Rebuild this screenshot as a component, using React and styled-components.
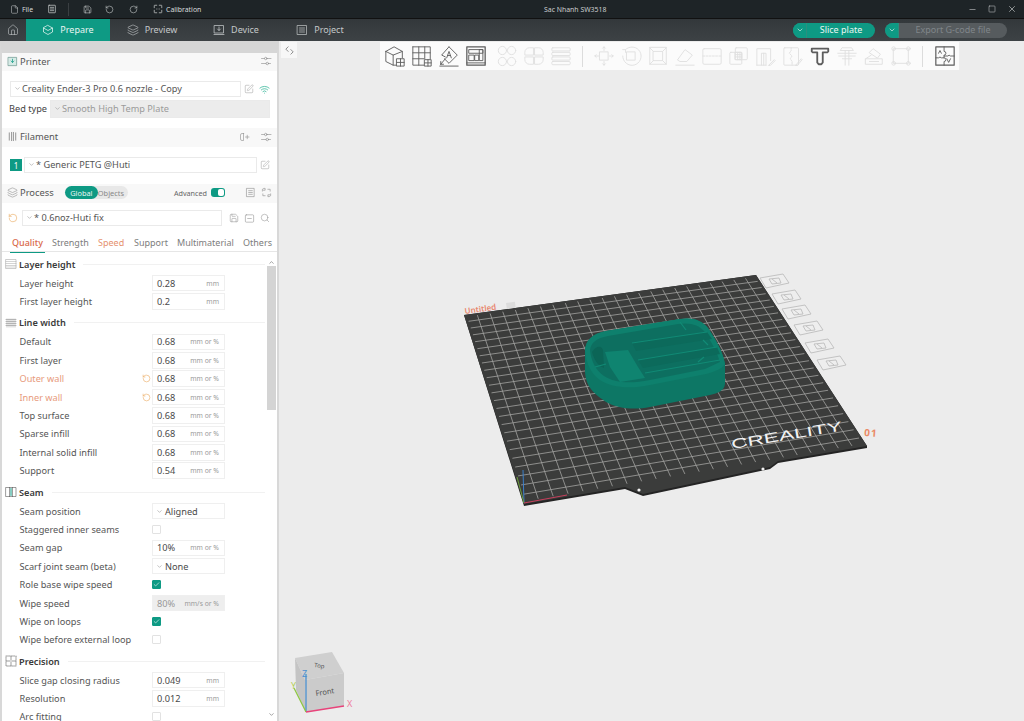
import React from "react";
import styled, { createGlobalStyle } from "styled-components";
import {
  File,
  House,
  Layers,
  Minus,
  RotateCcw,
  RotateCw,
  Save,
  Search,
  Square,
  SquarePen,
  Wifi,
  X,
  ChevronDown,
  ChevronUp,
  Check,
} from "lucide-react";

const GlobalStyle = createGlobalStyle`
  html, body {
    margin: 0;
    padding: 0;
    overflow: hidden;
    background: #ececec;
  }
  * {
    box-sizing: border-box;
  }
  body {
    font-family: "Noto Sans", "Open Sans", sans-serif;
    color: #444;
  }
`;

const TEAL = "#0e9a84";

const sections = [
  {
    title: "Layer height",
    icon: "layer",
    rows: [
      { label: "Layer height", value: "0.28", unit: "mm" },
      { label: "First layer height", value: "0.2", unit: "mm" },
    ],
  },
  {
    title: "Line width",
    icon: "line",
    rows: [
      { label: "Default", value: "0.68", unit: "mm or %" },
      { label: "First layer", value: "0.68", unit: "mm or %" },
      { label: "Outer wall", value: "0.68", unit: "mm or %", changed: true },
      { label: "Inner wall", value: "0.68", unit: "mm or %", changed: true },
      { label: "Top surface", value: "0.68", unit: "mm or %" },
      { label: "Sparse infill", value: "0.68", unit: "mm or %" },
      { label: "Internal solid infill", value: "0.68", unit: "mm or %" },
      { label: "Support", value: "0.54", unit: "mm or %" },
    ],
  },
  {
    title: "Seam",
    icon: "seam",
    rows: [
      { label: "Seam position", select: "Aligned" },
      { label: "Staggered inner seams", check: false },
      { label: "Seam gap", value: "10%", unit: "mm or %" },
      { label: "Scarf joint seam (beta)", select: "None" },
      { label: "Role base wipe speed", check: true },
      { label: "Wipe speed", value: "80%", unit: "mm/s or %", disabled: true },
      { label: "Wipe on loops", check: true },
      { label: "Wipe before external loop", check: false },
    ],
  },
  {
    title: "Precision",
    icon: "precision",
    rows: [
      { label: "Slice gap closing radius", value: "0.049", unit: "mm" },
      { label: "Resolution", value: "0.012", unit: "mm" },
      { label: "Arc fitting", check: false },
    ],
  },
];

const tabs = [
  { name: "Quality", w: 40, active: true },
  { name: "Strength", w: 46 },
  { name: "Speed", w: 36, changed: true },
  { name: "Support", w: 43 },
  { name: "Multimaterial", w: 66 },
  { name: "Others", w: 32 },
];

const Page = styled.div`
  width: 1024px;
  height: 721px;
  display: flex;
  flex-direction: column;
  overflow: hidden;
`;

const TitleBar = styled.header`
  height: 19px;
  flex: none;
  display: flex;
  align-items: center;
  background: #1e2427;
  border-bottom: 1px solid #111;
  color: #d9dcdd;
  font-size: 6.9px;
`;

const TitleLeft = styled.div`
  flex: 0 0 544px;
  display: flex;
  align-items: center;
  padding-left: 10px;
`;

const TitleItem = styled.div`
  display: flex;
  align-items: center;
  gap: 3px;
  margin-right: ${(p) => p.$mr || 14}px;
`;

const TitleDivider = styled.div`
  width: 1px;
  height: 13px;
  background: #3a3f42;
  margin-right: 14px;
`;

const DocName = styled.div`
  flex: none;
  color: #c9cccd;
`;

const WindowControls = styled.div`
  margin-left: auto;
  display: flex;
  align-items: center;
  gap: 11px;
  padding-right: 7px;
  color: #d0d3d4;
`;

const NavBar = styled.nav`
  height: 22px;
  flex: none;
  display: flex;
  align-items: stretch;
  background: linear-gradient(#33383b, #3d4245);
  color: #c4c8c9;
  font-size: 9px;
`;

const HomeTab = styled.div`
  width: 26px;
  display: flex;
  align-items: center;
  justify-content: center;
`;

const NavTab = styled.div`
  width: 84px;
  padding-bottom: 1px;
  display: flex;
  align-items: center;
  justify-content: center;
  gap: 6px;
  background: ${(p) => (p.$active ? TEAL : "transparent")};
  color: ${(p) => (p.$active ? "#e8f5f2" : "inherit")};
`;

const NavRight = styled.div`
  margin-left: auto;
  display: flex;
  align-items: center;
  gap: 10px;
  padding-right: 17px;
`;

const SplitButton = styled.div`
  width: ${(p) => p.$w}px;
  height: 15px;
  display: flex;
  border-radius: 8px;
  overflow: hidden;
  font-size: 9px;
  background: ${(p) => (p.$off ? "#565b5e" : TEAL)};
  color: ${(p) => (p.$off ? "#80868a" : "#eaf6f3")};
`;

const SplitArrow = styled.div`
  width: 14px;
  display: flex;
  align-items: center;
  justify-content: center;
  background: ${TEAL};
  color: #dff2ee;
  border-right: 1px solid #2c8f7e;
`;

const SplitLabel = styled.div`
  flex: 1;
  padding-bottom: 1px;
  display: flex;
  align-items: center;
  justify-content: center;
`;

const Main = styled.main`
  flex: 1;
  min-height: 0;
  display: flex;
`;

const Sidebar = styled.aside`
  width: 279px;
  flex: none;
  display: flex;
  flex-direction: column;
  background: #fff;
  border-left: 2px solid #d8d8d8;
  border-right: 2px solid #d8d8d8;
  border-top: 12px solid #d6d6d6;
  font-size: 9.2px;
`;

const PanelHead = styled.div`
  height: ${(p) => p.$h || 18}px;
  margin-top: ${(p) => p.$mt || 0}px;
  flex: none;
  display: flex;
  align-items: center;
  gap: 2px;
  padding: 0 5px 2px 5px;
  background: #f8f8f8;
  color: #555;
  font-size: 9.4px;
`;

const HeadRight = styled.div`
  margin-left: auto;
  display: flex;
  align-items: center;
  gap: ${(p) => p.$gap || 10}px;
  color: #8b8b8b;
`;

const PanelRow = styled.div`
  flex: none;
  height: ${(p) => p.$h}px;
  margin-top: ${(p) => p.$mt || 0}px;
  display: flex;
  align-items: center;
  padding: 0 7px 0 ${(p) => p.$pl || 8}px;
  gap: ${(p) => p.$gap || 3}px;
`;

const Select = styled.div`
  height: ${(p) => p.$h || 16}px;
  width: ${(p) => p.$w}px;
  flex: ${(p) => (p.$w ? "none" : 1)};
  display: flex;
  align-items: center;
  gap: 1px;
  padding: 0 0 1px 3px;
  border: 1px solid #eaeaea;
  background: ${(p) => (p.$off ? "#ececec" : "#fff")};
  color: ${(p) => (p.$off ? "#9b9b9b" : "#555")};
  font-size: 9.2px;
`;

const Caret = styled(ChevronDown)`
  color: #999;
  flex: none;
`;

const SideLabel = styled.span`
  color: #444;
  width: 38px;
  flex: none;
  padding-bottom: 1px;
  white-space: nowrap;
`;

const FilamentBadge = styled.div`
  width: 12px;
  height: 12px;
  flex: none;
  background: ${TEAL};
  color: #fff;
  font-size: 8px;
  display: flex;
  align-items: center;
  justify-content: center;
`;

const ToggleGroup = styled.div`
  width: 63px;
  height: 13px;
  margin-left: 9px;
  display: flex;
  align-items: center;
  border-radius: 7px;
  background: #e8e8e8;
  font-size: 7.4px;
  color: #888;
`;

const ToggleOn = styled.div`
  width: 33px;
  height: 13px;
  border-radius: 7px;
  display: flex;
  align-items: center;
  justify-content: center;
  background: ${TEAL};
  color: #e8f5f2;
`;

const ToggleOff = styled.div`
  padding-left: 0;
`;

const AdvancedLabel = styled.span`
  font-size: 7.2px;
  color: #666;
`;

const Switch = styled.div`
  width: 14px;
  height: 9px;
  border-radius: 3px;
  background: ${TEAL};
  display: flex;
  justify-content: flex-end;
  align-items: center;
  padding-right: 1px;
  margin-left: -1px;
  margin-right: 15px;

  &::after {
    content: "";
    width: 6px;
    height: 7px;
    border-radius: 2px;
    background: #fff;
  }
`;

const Tabs = styled.div`
  flex: none;
  height: 16px;
  margin-top: 10px;
  display: flex;
  padding-left: 8px;
  border-bottom: 1px solid #e6e6e6;
  font-size: 9px;
`;

const Tab = styled.div`
  width: ${(p) => p.$w}px;
  flex: none;
  white-space: nowrap;
`;

const TabLabel = styled.span`
  display: inline-block;
  height: 16px;
  line-height: 12px;
  padding: 0 2px;
  color: ${(p) => (p.$active ? "#d9694a" : p.$changed ? "#e5916f" : "#7d7d7d")};
  font-weight: ${(p) => (p.$active ? 500 : 400)};
  border-bottom: ${(p) => (p.$active ? `1.5px solid ${TEAL}` : "none")};
`;

const ScrollArea = styled.div`
  flex: 1;
  min-height: 0;
  display: flex;
  overflow: hidden;
`;

const Settings = styled.div`
  flex: 1;
  min-width: 0;
  overflow: hidden;
`;

const SectionHead = styled.div`
  height: 19.6px;
  margin-top: 2.4px;
  display: flex;
  align-items: center;
  gap: 2px;
  padding: 0 2px 0 3px;
  color: #3b3b3b;
  font-size: 9.2px;
  font-weight: 600;

  &::after {
    content: "";
    flex: 1;
    height: 1px;
    margin-left: 6px;
    background: #f1f1f1;
  }
`;

const Row = styled.div`
  height: 18.4px;
  display: grid;
  grid-template-columns: 150px 73px;
  align-items: center;
`;

const RowLabel = styled.div`
  display: flex;
  align-items: center;
  padding-left: 17.5px;
  padding-right: 1px;
  color: ${(p) => (p.$changed ? "#e79a7c" : "#555")};
  white-space: nowrap;
`;

const ResetSlot = styled.div`
  margin-left: auto;
  display: flex;
  color: #e9a657;
`;

const Field = styled.div`
  height: 16.5px;
  display: flex;
  align-items: center;
  justify-content: space-between;
  padding: 0 5px 0 4px;
  border: 1px solid #efefef;
  background: ${(p) => (p.$off ? "#eeeeee" : "#fff")};
  color: ${(p) => (p.$off ? "#999" : "#4a4a4a")};
  font-size: 9.2px;
`;

const Unit = styled.span`
  font-size: 6.8px;
  color: #9a9a9a;
`;

const FieldSelect = styled(Field)`
  justify-content: flex-start;
  gap: 2px;
  padding-left: 3px;
`;

const CheckBox = styled.div`
  width: 9px;
  height: 9px;
  border-radius: 1px;
  display: flex;
  align-items: center;
  justify-content: center;
  border: 1px solid ${(p) => (p.$on ? TEAL : "#e2e2e2")};
  background: ${(p) => (p.$on ? TEAL : "#fff")};
  color: #fff;
`;

const ScrollTrack = styled.div`
  width: 9px;
  flex: none;
  display: flex;
  flex-direction: column;
  align-items: center;
  background: #fff;
  margin-right: 1px;
  color: #666;
`;

const ScrollCap = styled.div`
  height: 14px;
  flex: none;
  display: flex;
  align-items: ${(p) => (p.$top ? "flex-end" : "center")};
  justify-content: center;
`;

const ScrollThumb = styled.div`
  width: 9px;
  height: 144px;
  flex: none;
  background: #d4d4d4;
`;

const ScrollRest = styled.div`
  flex: 1;
`;

const Viewport = styled.section`
  position: relative;
  flex: 1;
  min-width: 0;
  background: #ececec;
  overflow: hidden;
`;

const SceneSvg = styled.svg`
  display: block;
  width: 745px;
  height: 680px;
`;

const CollapseBtn = styled.div`
  position: absolute;
  left: 2px;
  top: 1px;
  width: 16px;
  height: 16px;
  background: #f7f7f7;
  display: flex;
  align-items: center;
  justify-content: center;
`;

const Toolbar = styled.div`
  position: absolute;
  left: 101px;
  top: 1px;
  height: 28px;
  display: flex;
  align-items: center;
  padding: 0 1px 0 1px;
  background: #fbfbfb;
`;

const ToolSlot = styled.div`
  width: 27px;
  height: 28px;
  display: flex;
  align-items: center;
  justify-content: center;
  margin-left: ${(p) => p.$ml || 0}px;
  color: ${(p) => (p.$off ? "#dfdfdf" : "#5d5d5d")};
`;

const ToolSep = styled.div`
  width: ${(p) => p.$w}px;
  display: flex;
  justify-content: center;

  &::after {
    content: "";
    width: 1px;
    height: 21px;
    background: #dcdcdc;
  }
`;

const Glyph = ({ size = 22, sw = 1, children }) => (
  <svg
    width={size}
    height={size}
    viewBox="0 0 24 24"
    fill="none"
    stroke="currentColor"
    strokeWidth={sw}
    strokeLinecap="round"
    strokeLinejoin="round"
  >
    {children}
  </svg>
);

const toolIcons = {
  cube: (
    <>
      <path d="M2 7l9-5 9 5v7M2 7v11l8 4h3M2 7l8 4 10-4M10 11v11" />
      <rect x="14" y="15" width="8" height="8" />
      <path d="M18 15v8M14 19h8" />
    </>
  ),
  grid: (
    <>
      <path d="M2 2h19v13M2 2v20h12M2 8.5h19M2 15h12M8.5 2v20M15 2v13" />
      <rect x="15" y="16" width="7" height="7" />
      <path d="M18.5 16v7M15 19.5h7" />
    </>
  ),
  orient: (
    <>
      <path d="M12 2l9 9-9 9-5-5M8 13l-4-2 8-9" />
      <path d="M3 21l5-6M3 21h3M3 21v-3M2 23h20" />
      <path d="M9.5 14l2.5-7 2.5 7M10.4 11.5h3.2" />
    </>
  ),
  arrange: (
    <>
      <rect x="2" y="2" width="20" height="20" strokeWidth="1.4" />
      <rect x="4.5" y="5" width="15" height="4" />
      <rect x="4.5" y="11" width="5.5" height="6" />
      <rect x="11" y="11" width="4" height="6" />
      <rect x="16" y="5" width="3.5" height="12" />
      <path d="M2 19.5h20" />
    </>
  ),
  splitA: (
    <>
      <circle cx="7" cy="6" r="4.5" />
      <circle cx="17" cy="6" r="4.5" />
      <circle cx="7" cy="18" r="4.5" />
      <circle cx="17" cy="18" r="4.5" />
    </>
  ),
  splitB: (
    <>
      <path d="M11 3H7a5 5 0 0 0-5 5v3h9zM13 3h4a5 5 0 0 1 5 5v3h-9zM11 21H7a5 5 0 0 1-5-5v-3h9zM13 21h4a5 5 0 0 0 5-5v-3h-9z" />
    </>
  ),
  stack: (
    <>
      <rect x="2" y="3" width="20" height="3.5" rx="1" />
      <rect x="2" y="8" width="20" height="3.5" rx="1" />
      <rect x="2" y="13" width="20" height="3.5" rx="1" />
      <rect x="2" y="18" width="20" height="3.5" rx="1" />
    </>
  ),
  move: (
    <>
      <rect x="7.5" y="7.5" width="9" height="9" />
      <path d="M12 2v4M12 18v4M2 12h4M18 12h4M10.5 3.5L12 2l1.5 1.5M10.5 20.5L12 22l1.5-1.5M3.5 10.5L2 12l1.5 1.5M20.5 10.5L22 12l-1.5 1.5" />
    </>
  ),
  rotate: (
    <>
      <path d="M6 5a10 10 0 1 1-3 7" />
      <rect x="7.5" y="7.5" width="9" height="9" />
      <path d="M3 5h3v3" />
    </>
  ),
  scale: (
    <>
      <rect x="7" y="7" width="10" height="10" />
      <path d="M3 3v18h18V3zM3 3l4 4M21 3l-4 4M3 21l4-4M21 21l-4-4" />
    </>
  ),
  flatten: (
    <>
      <path d="M4 16l8-11 8 6-6 7H7z" />
      <path d="M2 22h20" />
    </>
  ),
  cut: (
    <>
      <rect x="2" y="4" width="20" height="17" rx="1.5" />
      <path d="M2 12h20" strokeDasharray="2 1.5" />
    </>
  ),
  boolean: (
    <>
      <rect x="2" y="8" width="13" height="13" rx="1" />
      <rect x="8" y="3" width="13" height="13" rx="1" />
      <path d="M8 8h7v8H8zM8 10.5h7M8 13h7M10.5 8v8M13 8v8" />
    </>
  ),
  seamPaint: (
    <>
      <path d="M2 22V4h15v13M7 22V9h5v13M2 22h10M9.5 9v13" />
      <path d="M15 22l6-6 1 1-5 5z" />
    </>
  ),
  seamBrush: (
    <>
      <rect x="2" y="3" width="16" height="19" rx="1" />
      <path d="M10 3v3l-2 3 3 3-2 3 2 3v4" strokeDasharray="1.5 1.2" />
      <path d="M15 22l6-7 1 1-5 6z" />
    </>
  ),
  emboss: (
    <>
      <path d="M3 4h18v3l-1 1h-5v11l-1.5 2h-3L9 19V8H4L3 7z" strokeWidth="2" />
    </>
  ),
  stamp: (
    <>
      <path d="M7 3h10l2 3H5zM2 9h20M3 12h18M10 6v16M14 6v16M7 15h10" />
    </>
  ),
  measure: (
    <>
      <path d="M3 15h18v6H3zM3 15l6-4M7 8l4-4 8 6-3 4zM7 18h10" />
    </>
  ),
  assemble: (
    <>
      <rect x="4" y="4" width="16" height="16" />
      <circle cx="4" cy="4" r="2" />
      <circle cx="20" cy="4" r="2" />
      <circle cx="4" cy="20" r="2" />
      <circle cx="20" cy="20" r="2" />
    </>
  ),
  puzzle: (
    <>
      <rect x="2" y="2" width="20" height="20" strokeWidth="1.3" />
      <path d="M11 2v5a2 2 0 0 1 0 4v3h-3a2 2 0 0 0-3 0H2M11 14a2 2 0 0 1 0 4v4M11 12h4a2 2 0 0 1 3 0h4" />
      <path d="M5 9l1.5-3L8 9M14 15l2 4 2-4" />
    </>
  ),
};

const toolbar = [
  { i: "cube" },
  { i: "grid" },
  { i: "orient" },
  { i: "arrange" },
  { i: "splitA", off: true, ml: 4 },
  { i: "splitB", off: true },
  { i: "stack", off: true },
  { sep: 16 },
  { i: "move", off: true },
  { i: "rotate", off: true },
  { i: "scale", off: true },
  { i: "flatten", off: true },
  { i: "cut", off: true },
  { i: "boolean", off: true },
  { i: "seamPaint", off: true },
  { i: "seamBrush", off: true },
  { i: "emboss" },
  { i: "stamp", off: true },
  { i: "measure", off: true },
  { i: "assemble", off: true },
  { sep: 17 },
  { i: "puzzle" },
];

const sectionIcons = {
  layer: (
    <>
      <rect x="2" y="3" width="20" height="18" stroke="#9a9a9a" />
      <path d="M2 7h20M2 11h20M2 15h20M2 18h20" stroke="#a8a8a8" />
    </>
  ),
  line: (
    <>
      <rect x="2" y="3" width="20" height="18" fill="#e4e4e4" stroke="none" />
      <path d="M2 5h20M2 9h20M2 13h20M2 17h20" stroke="#a4a4a4" strokeWidth="1.5" />
    </>
  ),
  seam: (
    <>
      <rect x="2" y="3" width="20" height="18" />
      <path d="M9 3v18M15 3v18" />
      <path d="M12 5v14" stroke={TEAL} strokeWidth="2" />
    </>
  ),
  precision: (
    <>
      <rect x="2" y="2" width="20" height="20" strokeDasharray="3 2" />
      <path d="M12 3v7M12 14v7M3 12h7M14 12h7" />
    </>
  ),
};

const Sliders = () => (
  <Glyph size={12} sw={1.2}>
    <path d="M3 7h6M14 7h8M3 17h9M17 17h4" />
    <circle cx="11.5" cy="7" r="2.5" />
    <circle cx="14.5" cy="17" r="2.5" />
  </Glyph>
);

// unit square -> bed quad, so the grid lines converge like the real plate
const quadMap = (p0, p1, p2, p3) => {
  const dx1 = p1[0] - p2[0];
  const dx2 = p3[0] - p2[0];
  const sx = p0[0] - p1[0] + p2[0] - p3[0];
  const dy1 = p1[1] - p2[1];
  const dy2 = p3[1] - p2[1];
  const sy = p0[1] - p1[1] + p2[1] - p3[1];
  const den = dx1 * dy2 - dx2 * dy1;
  const g = (sx * dy2 - dx2 * sy) / den;
  const h = (dx1 * sy - sx * dy1) / den;
  const a = p1[0] - p0[0] + g * p1[0];
  const b = p3[0] - p0[0] + h * p3[0];
  const d = p1[1] - p0[1] + g * p1[1];
  const e = p3[1] - p0[1] + h * p3[1];
  return (u, v) => {
    const w = g * u + h * v + 1;
    return [(a * u + b * v + p0[0]) / w, (d * u + e * v + p0[1]) / w];
  };
};

const bed = quadMap([464, 315], [756, 275], [867, 446], [524, 504]);

const bedGrid = () => {
  const lines = [];
  const n = 24;
  for (let i = 1; i < n; i++) {
    const t = i / n;
    const [a, b] = bed(t, 0.012);
    const [c, d] = bed(t, 0.988);
    const [e, f] = bed(0.008, t);
    const [g, h] = bed(0.992, t);
    lines.push(`M${a} ${b}L${c} ${d}M${e} ${f}L${g} ${h}`);
  }
  return lines.join("");
};

const plateTags = [
  [773, 281],
  [785, 297],
  [795, 312],
  [807, 328],
  [818, 346],
  [830, 363],
];

const Scene = () => (
  <SceneSvg viewBox="279 41 745 680">
    {/* plate */}
    <path
      d="M464 315L756 275L867 446L867 448L778 463L770 469L643 496L625 489L524 506Z"
      fill="#242424"
    />
    <path
      d="M464 315L756 275L867 446L778 461L770 467L643 494L625 487L524 504Z"
      fill="#3b3c3b"
    />
    <path d={bedGrid()} stroke="#a3a3a1" strokeWidth="0.8" fill="none" />
    <circle cx="639" cy="490" r="1.6" fill="#f2f2f2" />
    <circle cx="763" cy="469" r="1.6" fill="#f2f2f2" />

    {/* plate labels */}
    <text
      x="465"
      y="314"
      fontFamily="Noto Sans, sans-serif"
      fontSize="8"
      fontWeight="600"
      fill="#e8866c"
      transform="rotate(-8 465 314)"
    >
      Untitled
    </text>
    <rect x="506" y="303" width="9" height="6" fill="#dcdcdc" transform="rotate(-8 506 303)" />
    <text
      x="864"
      y="436"
      fontFamily="Noto Sans, sans-serif"
      fontWeight="700"
      fontSize="10"
      fill="#ea8a66"
      letterSpacing="1"
      transform="rotate(4 864 436)"
    >
      01
    </text>
    <text
      x="732"
      y="449"
      fontFamily="Liberation Sans, sans-serif"
      fontSize="13.5"
      fill="#f2f2f2"
      textLength="112"
      lengthAdjust="spacingAndGlyphs"
      transform="rotate(-9.5 732 449)"
    >
      CREALITY
    </text>

    {/* plate tags */}
    {plateTags.map(([x, y]) => (
      <g key={x} transform={`translate(${x} ${y})`} fill="none" stroke="#bdbdbd" strokeWidth="0.9">
        <path d="M-13 -3L10 -7L16 2L-7 7Z" fill="#eeeeee" />
        <path d="M-4 -2L6 -3L8 2L-1 3ZM-1 -2L4 2" />
      </g>
    ))}

    {/* bed axes */}
    <path d="M524 503L523 470" stroke="#3b7fc9" strokeWidth="1" />
    <path d="M524 503L517 477" stroke="#6d9e3c" strokeWidth="1" />
    <path d="M524 503L567 495" stroke="#c63f5c" strokeWidth="1" />

    {/* printed part */}
    <path
      d="M585 352C585 340 592 334 606 331L680 319C692 317 702 320 708 328C716 340 723 352 725 364L725 384C724 391 718 393 710 395L650 407C635 410 618 409 606 402C595 394 586 388 585 372Z"
      fill="#0d7765"
    />
    <path
      d="M585 350C586 340 592 334 606 331L680 319C692 317 702 320 708 328C716 340 723 352 725 364C722 369 716 371 706 374L650 385C630 389 612 388 600 380C590 373 586 362 585 350Z"
      fill="#0e806d"
    />
    <path
      d="M590 350C591 343 596 338 608 336L678 324C690 322 699 325 704 331C711 341 717 352 720 362L705 369L650 380C630 384 615 383 604 376C595 370 591 360 590 350Z"
      fill="#0d6f60"
    />
    <path d="M605 352L628 350L638 367L645 378L620 382L610 367Z" fill="#0f8470" />
    <path d="M592 352C596 346 601 345 603 350L604 368C598 366 594 360 592 352Z" fill="#0b6556" />
    <path d="M632 343L707 332L712 339L636 351Z" fill="#0c6a5b" />
    <path d="M638 360L717 347L720 354L643 368Z" fill="#0c6a5b" />
    <g fill="none" stroke="#118a75" strokeWidth="1.2">
      <path d="M632 343L707 332" />
      <path d="M638 360L717 347" />
      <path d="M645 373L720 360" />
      <path d="M595 367L606 364" />
      <path d="M680 322L686 330M703 340L708 345M698 362L704 357" />
    </g>

    {/* view cube */}
    <path d="M295 658L332 652L344 673L305 680Z" fill="#cfcfcf" />
    <path d="M295 658L305 680L306 712L296 690Z" fill="#c4c4c4" />
    <path d="M305 680L344 673L344 706L306 712Z" fill="#cbcbcb" />
    <text
      x="314"
      y="667"
      fontFamily="Noto Sans, sans-serif"
      fontSize="6"
      fill="#555"
      transform="rotate(8 314 667)"
    >
      Top
    </text>
    <text
      x="316"
      y="696"
      fontFamily="Noto Sans, sans-serif"
      fontSize="7.5"
      fill="#555"
      transform="rotate(-9 316 696)"
    >
      Front
    </text>
    <path d="M306 712L306 674" stroke="#4a90d0" strokeWidth="1.3" />
    <path d="M306 712L294 688" stroke="#8cc63f" strokeWidth="1.3" />
    <path d="M306 712L344 706" stroke="#e8437a" strokeWidth="1.5" />
    <g fontFamily="Noto Sans, sans-serif" fontSize="9">
      <text x="302" y="677" fill="#4a90d0">Z</text>
      <text x="291" y="689" fill="#b3cf5b">Y</text>
      <text x="347" y="707" fill="#ee7d9c">X</text>
    </g>
  </SceneSvg>
);

const SettingRow = ({ row }) => (
  <Row>
    <RowLabel $changed={row.changed}>
      {row.label}
      {row.changed && (
        <ResetSlot>
          <RotateCcw size={9} strokeWidth={1.5} />
        </ResetSlot>
      )}
    </RowLabel>
    {row.value && (
      <Field $off={row.disabled}>
        {row.value}
        <Unit>{row.unit}</Unit>
      </Field>
    )}
    {row.select && (
      <FieldSelect>
        <Caret size={7} />
        {row.select}
      </FieldSelect>
    )}
    {row.check !== undefined && (
      <CheckBox $on={row.check}>{row.check && <Check size={7} strokeWidth={2} />}</CheckBox>
    )}
  </Row>
);

const App = () => (
  <Page>
    <GlobalStyle />
    <TitleBar>
      <TitleLeft>
        <TitleItem $mr={14}>
          <File size={9} strokeWidth={1.3} />
          File
        </TitleItem>
        <TitleItem $mr={11}>
          <Glyph size={10} sw={1.6}>
            <rect x="4" y="3" width="16" height="18" rx="1" />
            <path d="M8 8h8M8 12h8M8 16h8" />
          </Glyph>
        </TitleItem>
        <TitleDivider />
        <TitleItem $mr={13}>
          <Save size={9} strokeWidth={1.4} />
        </TitleItem>
        <TitleItem $mr={15}>
          <RotateCcw size={9} strokeWidth={1.4} />
        </TitleItem>
        <TitleItem $mr={15}>
          <RotateCw size={9} strokeWidth={1.4} />
        </TitleItem>
        <TitleItem>
          <Glyph size={10} sw={1.6}>
            <path d="M9 3H4a1 1 0 0 0-1 1v5M15 3h5a1 1 0 0 1 1 1v5M9 21H4a1 1 0 0 1-1-1v-5M15 21h5a1 1 0 0 0 1-1v-5" />
            <path d="M9 12h.5M14.5 12h.5" />
          </Glyph>
          Calibration
        </TitleItem>
      </TitleLeft>
      <DocName>Sac Nhanh SW3518</DocName>
      <WindowControls>
        <Minus size={9} strokeWidth={1.5} />
        <Square size={8} strokeWidth={1.5} />
        <X size={10} strokeWidth={1.5} />
      </WindowControls>
    </TitleBar>

    <NavBar>
      <HomeTab>
        <House size={12} strokeWidth={1.2} />
      </HomeTab>
      <NavTab $active>
        <Glyph size={12} sw={1.5}>
          <path d="M12 3l9 5v8l-9 5-9-5V8zM3 8l9 5 9-5" />
        </Glyph>
        Prepare
      </NavTab>
      <NavTab>
        <Layers size={12} strokeWidth={1.2} />
        Preview
      </NavTab>
      <NavTab>
        <Glyph size={12} sw={1.5}>
          <rect x="3" y="3" width="18" height="15" />
          <path d="M12 6v7M9 10l3 3 3-3M2 21h20" />
        </Glyph>
        Device
      </NavTab>
      <NavTab>
        <Glyph size={12} sw={1.4}>
          <rect x="3" y="3" width="18" height="18" />
          <path d="M7 8h10M7 12h10M7 16h10" />
        </Glyph>
        Project
      </NavTab>
      <NavRight>
        <SplitButton $w={82}>
          <SplitArrow>
            <ChevronDown size={8} />
          </SplitArrow>
          <SplitLabel>Slice plate</SplitLabel>
        </SplitButton>
        <SplitButton $w={122} $off>
          <SplitArrow>
            <ChevronDown size={8} />
          </SplitArrow>
          <SplitLabel>Export G-code file</SplitLabel>
        </SplitButton>
      </NavRight>
    </NavBar>

    <Main>
      <Sidebar>
        <PanelHead>
          <Glyph size={11} sw={1.6}>
            <rect x="3" y="3" width="18" height="18" stroke="#6f9a92" fill="#d6ebe6" />
            <path d="M12 7v7M9 11l3 3 3-3" stroke={TEAL} />
          </Glyph>
          Printer
          <HeadRight>
            <Sliders />
          </HeadRight>
        </PanelHead>
        <PanelRow $h={16} $mt={10}>
          <Select $w={231}>
            <Caret size={7} />
            Creality Ender-3 Pro 0.6 nozzle - Copy
          </Select>
          <HeadRight $gap={5}>
            <SquarePen size={10} strokeWidth={1.2} color="#999" />
            <Wifi size={11} strokeWidth={1.7} color="#35b598" />
          </HeadRight>
        </PanelRow>
        <PanelRow $h={18} $mt={3} $pl={7}>
          <SideLabel>Bed type</SideLabel>
          <Select $off $h={18}>
            <Caret size={7} />
            Smooth High Temp Plate
          </Select>
        </PanelRow>

        <PanelHead $h={19} $mt={10}>
          <Glyph size={11} sw={1.3}>
            <path d="M5 4v16M10 3v18M14 3v18M19 4v16" />
          </Glyph>
          Filament
          <HeadRight $gap={10}>
            <Glyph size={12} sw={1.2}>
              <path d="M11 5H8a3 3 0 0 0-3 3v8a3 3 0 0 0 3 3h3V5zM15 12h7M18.5 8.5v7" />
            </Glyph>
            <Sliders />
          </HeadRight>
        </PanelHead>
        <PanelRow $h={16} $mt={10} $gap={2}>
          <FilamentBadge>1</FilamentBadge>
          <Select $w={233}>
            <Caret size={7} />* Generic PETG @Huti
          </Select>
          <HeadRight>
            <SquarePen size={10} strokeWidth={1.2} color="#999" />
          </HeadRight>
        </PanelRow>

        <PanelHead $h={19} $mt={11}>
          <Layers size={11} strokeWidth={1.2} color="#888" />
          Process
          <ToggleGroup>
            <ToggleOn>Global</ToggleOn>
            <ToggleOff>Objects</ToggleOff>
          </ToggleGroup>
          <HeadRight $gap={5}>
            <AdvancedLabel>Advanced</AdvancedLabel>
            <Switch />
            <Glyph size={11} sw={1.3}>
              <rect x="4" y="3" width="16" height="18" />
              <path d="M8 8h8M8 12h8M8 16h8" />
            </Glyph>
            <Glyph size={11} sw={1.3}>
              <path d="M3 9V5l3-2h3v4H5M21 15v4l-3 2h-3v-4h4M15 5h5v4M9 19H4v-4" />
            </Glyph>
          </HeadRight>
        </PanelHead>
        <PanelRow $h={16} $mt={7} $pl={6} $gap={4}>
          <RotateCcw size={10} strokeWidth={1.4} color="#e9a657" />
          <Select $w={200}>
            <Caret size={7} />* 0.6noz-Huti fix
          </Select>
          <HeadRight $gap={5}>
            <Save size={10} strokeWidth={1.2} />
            <Glyph size={11} sw={1.2}>
              <rect x="3" y="4" width="18" height="16" rx="2" />
              <path d="M8 12h8" />
            </Glyph>
            <Search size={10} strokeWidth={1.2} />
          </HeadRight>
        </PanelRow>

        <Tabs>
          {tabs.map((t) => (
            <Tab key={t.name} $w={t.w}>
              <TabLabel $active={t.active} $changed={t.changed}>
                {t.name}
              </TabLabel>
            </Tab>
          ))}
        </Tabs>

        <ScrollArea>
          <Settings>
            {sections.map((s) => (
              <div key={s.title}>
                <SectionHead>
                  <Glyph size={12} sw={1}>
                    {sectionIcons[s.icon]}
                  </Glyph>
                  {s.title}
                </SectionHead>
                {s.rows.map((r) => (
                  <SettingRow key={r.label} row={r} />
                ))}
              </div>
            ))}
          </Settings>
          <ScrollTrack>
            <ScrollCap $top>
              <ChevronUp size={7} strokeWidth={2} />
            </ScrollCap>
            <ScrollThumb />
            <ScrollRest />
            <ScrollCap>
              <ChevronDown size={7} strokeWidth={2} />
            </ScrollCap>
          </ScrollTrack>
        </ScrollArea>
      </Sidebar>

      <Viewport>
        <Scene />
        <CollapseBtn>
          <Glyph size={11} sw={1.6}>
            <path d="M9 4L4 9l5 5M15 10l5 5-5 5" stroke="#666" />
          </Glyph>
        </CollapseBtn>
        <Toolbar>
          {toolbar.map((t, i) =>
            t.sep ? (
              <ToolSep key={i} $w={t.sep} />
            ) : (
              <ToolSlot key={i} $off={t.off} $ml={t.ml}>
                <Glyph>{toolIcons[t.i]}</Glyph>
              </ToolSlot>
            )
          )}
        </Toolbar>
      </Viewport>
    </Main>
  </Page>
);

export default App;
